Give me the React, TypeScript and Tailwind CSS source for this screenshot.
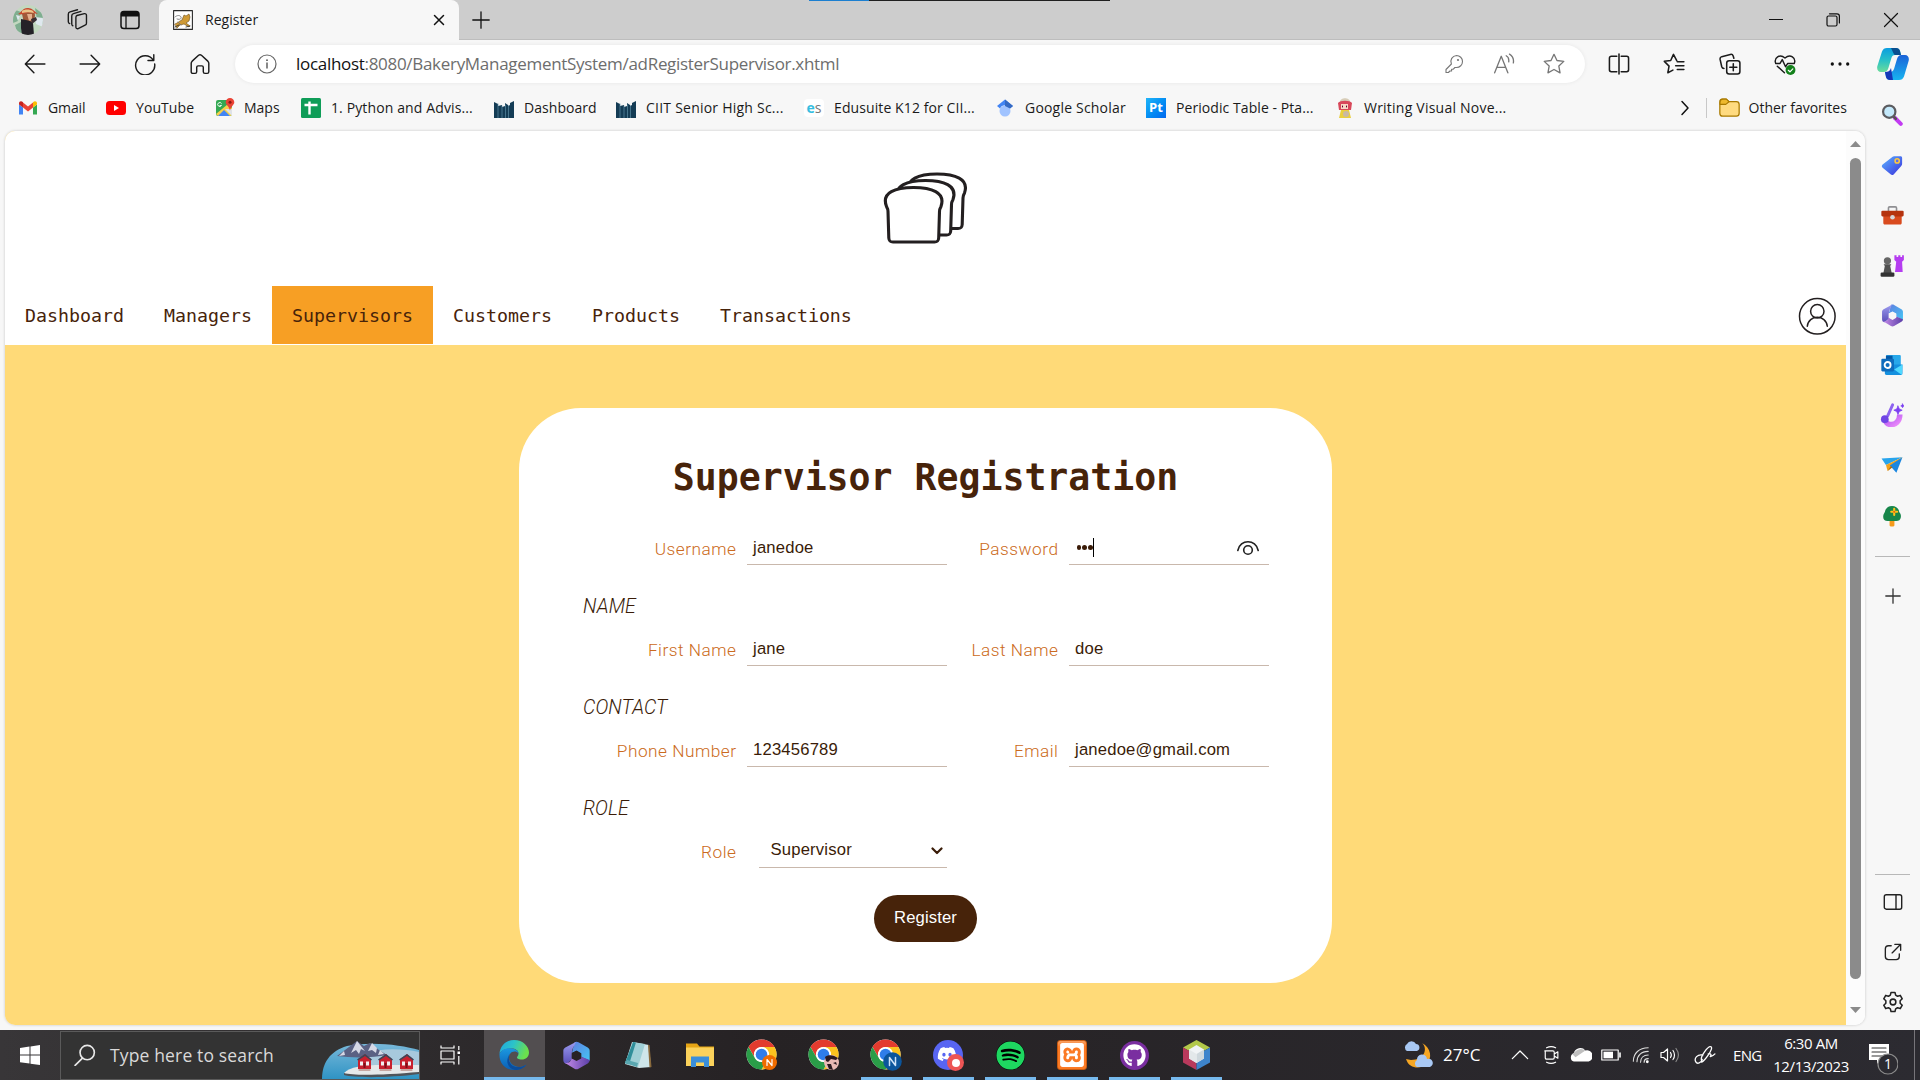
import React from "react";
import { FaDiscord, FaGithub, FaSpotify } from "react-icons/fa";
import { SiXampp } from "react-icons/si";

type IconProps = { w?: number; h?: number; box?: string; className?: string; children?: React.ReactNode };

function Icon({ w = 20, h, box = "0 0 20 20", className = "", children }: IconProps) {
  return (
    <svg
      width={w}
      height={h ?? w}
      viewBox={box}
      fill="none"
      stroke="none"
      strokeLinecap="round"
      strokeLinejoin="round"
      className={`shrink-0 ${className}`}
    >
      {children}
    </svg>
  );
}

/* ---------- title bar ---------- */

function Avatar() {
  return (
    <Icon w={30} h={30} box="0 0 30 30">
      <clipPath id="av"><circle cx="15" cy="15" r="15" /></clipPath>
      <g clipPath="url(#av)">
        <rect width="30" height="30" fill="#c3d8c0" />
        <path d="M0 4l8 3-3 9-5 2zM22 3l8 6v10l-6-4zM2 20l6-3 1 11-5-1z" fill="#7fae90" />
        <path d="M22 12l8 1v9l-7-3zM3 10l4 1-2 5z" fill="#dfe8ee" />
        <path d="M9 9c0-4 3-6 7-5 4 0 6 3 6 7l-2 7-4 2-5-2z" fill="#a05a3a" />
        <path d="M5 9c3-1 4-6 10-6 4 0 6 3 10 6-5-1-9-2-12-1-3 1-5 2-8 1z" fill="#c8472e" />
        <path d="M9 6c2-2 8-2 11 0l1 2c-4-1-8-1-12 0z" fill="#e9c58a" />
        <path d="M14 9l5 0v6l-3 1z" fill="#e3b08e" />
        <path d="M8 14l5 1 4 1 3 2 1 12H9l-1-7z" fill="#252228" />
        <path d="M18 14l5-2 1 3-5 4z" fill="#3a3034" />
      </g>
    </Icon>
  );
}

function TitleBar() {
  return (
    <div className="flex h-10 shrink-0 items-center border-b border-[#bdbdbd] bg-[#cdcdcd]">
      <div className="flex w-[159px] items-center">
        <div className="ml-[13px] w-[53px]"><Avatar /></div>
        <div className="w-[54px]">
          <Icon w={23}>
            <g stroke="#1b1b1b" strokeWidth="1.2">
              <path d="M9.500 6.500l6.500-1.600c1-.2 1.800.4 1.800 1.400v7c0 .8-.4 1.400-1.200 1.600l-6 3c-1 .4-2-.2-2-1.200V8.300c0-1 .2-1.600.9-1.800z" />
              <path d="M6 15.500c-.8-.3-1-.8-1-1.500V7c0-1.200.5-1.800 1.500-2.100L13 3" />
              <path d="M3.200 13.500c-.8-.3-1.200-.8-1.200-1.500V5.500c0-1.200.5-1.800 1.500-2.100L10 1.500" />
            </g>
          </Icon>
        </div>
        <Icon w={20}>
          <rect x="1" y="1.500" width="18" height="17" rx="2.800" stroke="#111" strokeWidth="1.500" />
          <path d="M1 3.500C1 2 2 1.500 3.500 1.500h13c1.500 0 2.500.8 2.500 2V6.500H1z" fill="#111" />
          <path d="M6 6v12" stroke="#111" strokeWidth="1.300" />
        </Icon>
      </div>
      <div className="flex h-10 w-[300px] items-center rounded-t-lg bg-[#f7f7f7] pl-[14px]">
        <Icon w={20}>
          <rect x=".6" y=".6" width="18.800" height="18.800" fill="#fff" stroke="#2a2a2a" strokeWidth="1.100" />
          <path d="M2 14c3-1 4-3 7-4l2-5 2 1 3-2 1 3-1 4-3 2 4 3-1 1-5-3-4 1-3 3z" fill="#cf9a35" stroke="#6b4d18" strokeWidth=".6" />
          <path d="M2 7c2-2 5-2 6 0s-2 3-4 2M5 12l3 3" stroke="#777" strokeWidth=".9" />
          <path d="M2 17l4-2M13 17l4-1" stroke="#333" strokeWidth=".9" />
        </Icon>
        <span className="ml-3 w-[225px] font-['Open_Sans'] text-[14px] tracking-[0.05px] text-[#1a1a1a]">Register</span>
        <Icon w={18} box="0 0 18 18"><path d="M4.500 4.500l9 9m0-9l-9 9" stroke="#111" strokeWidth="1.500" /></Icon>
      </div>
      <Icon w={18} className="ml-[13px]" box="0 0 18 18"><path d="M9 .8v16.400M.8 9h16.400" stroke="#111" strokeWidth="1.300" /></Icon>
      <div className="mb-[38px] ml-[319px] flex h-px w-[301px] shrink-0 bg-[#1f1f1f]">
        <div className="h-px w-[60px] bg-[#1c7fd0]" />
      </div>
      <div className="flex-1" />
      <div className="flex w-[173px] items-center">
        <div className="mr-[46px] ml-[22px] h-px w-[14px] bg-[#111]" />
        <Icon w={16} box="0 0 16 16" className="-ml-1 mr-[42px]">
          <rect x="2" y="4" width="10" height="10" rx="1.500" stroke="#111" strokeWidth="1.200" />
          <path d="M4.500 1.800h7.500c1.500 0 2.400.9 2.400 2.400V11" stroke="#111" strokeWidth="1.200" />
        </Icon>
        <Icon w={16} box="0 0 16 16"><path d="M1.500 1.500l13 13m0-13l-13 13" stroke="#111" strokeWidth="1.200" /></Icon>
      </div>
    </div>
  );
}

/* ---------- toolbar ---------- */

function Copilot() {
  return (
    <Icon w={32} box="0 0 32 32">
      <defs>
        <linearGradient id="cp1" x1="0" y1="0" x2="0" y2="1"><stop offset="0" stopColor="#0a9de0" /><stop offset=".5" stopColor="#27c0c8" /><stop offset="1" stopColor="#6bdc9a" /></linearGradient>
        <linearGradient id="cp2" x1="0" y1="0" x2="0" y2="1"><stop offset="0" stopColor="#1a62d8" /><stop offset="1" stopColor="#18b4f0" /></linearGradient>
      </defs>
      <path d="M5 3.500C6 1 7.500 0 10 0h9c2 0 3.500 1 4 3l1 4h-6c-2 0-3 1-3.600 3l-3 10c-.6 2-2 4-4.500 4H4c-3 0-4.500-3-3.600-6z" fill="url(#cp1)" />
      <path d="M14 0h5c2 0 3.500 1 4 3l1 4h-6c-1 0-2-3-4-7z" fill="#0a4f8f" />
      <path d="M27 28.500c-1 2.500-2.500 3.500-5 3.500h-9c-2 0-3.500-1-4-3l-1-5h5c2 0 3.200-1 4-3l3-10c.6-2 2-4 4.500-4H28c3 0 4.500 3 3.600 6z" fill="url(#cp2)" />
      <path d="M8 24c3 0 5-1 6-4l2 12h-3c-2 0-3.500-1-4-3z" fill="#1538b8" />
    </Icon>
  );
}

function Toolbar() {
  return (
    <div className="flex h-[47px] shrink-0 items-center">
      <div className="flex w-[235px] items-center gap-[33px] pl-6">
        <Icon w={22}><path d="M19 10H1.500M9 2L1.200 10 9 18" stroke="#1b1b1b" strokeWidth="1.300" /></Icon>
        <Icon w={22}><path d="M1 10h17.500M11 2l7.800 8L11 18" stroke="#1b1b1b" strokeWidth="1.300" /></Icon>
        <Icon w={22}><path d="M17.500 6.500A8.700 8.700 0 1 0 18.800 10M18 1.500v5.300h-5.300" stroke="#1b1b1b" strokeWidth="1.300" /></Icon>
        <Icon w={22}><path d="M2 9.300c0-.8.3-1.300.9-1.900l5.800-5.300c.8-.7 1.800-.7 2.600 0l5.800 5.300c.6.600.9 1.100.9 1.900V17c0 1-.6 1.500-1.500 1.500h-2c-1 0-1.500-.6-1.500-1.500v-4c0-.8-.5-1.300-1.300-1.300H8.300c-.8 0-1.300.5-1.300 1.300v4c0 1-.6 1.500-1.500 1.500h-2C2.600 18.500 2 18 2 17z" stroke="#1b1b1b" strokeWidth="1.300" /></Icon>
      </div>
      <div className="flex h-[38px] w-[1350px] items-center rounded-full bg-white pl-[22px] shadow-[0_0_4px_rgba(0,0,0,0.07)]">
        <Icon w={20}>
          <circle cx="10" cy="10" r="9" stroke="#666" strokeWidth="1.200" />
          <path d="M10 9v5" stroke="#555" strokeWidth="1.400" /><circle cx="10" cy="6.200" r=".9" fill="#555" />
        </Icon>
        <span className="ml-[19px] flex-1 whitespace-nowrap font-['Open_Sans'] text-[17px] tracking-[-0.3px] text-[#6d6d6d]">
          <span className="text-[#111]">localhost</span>:8080/BakeryManagementSystem/adRegisterSupervisor.xhtml
        </span>
        <div className="flex items-center gap-[29px] pr-[20px]">
          <Icon w={20}><path d="M12.500 1.500a6 6 0 0 1 0 12h-1.600l-1.600 1.700H7.600v1.800H5.900l-1.500 1.500H2v-3L7.400 10A6 6 0 0 1 12.500 1.500z" stroke="#767676" strokeWidth="1.100" /><circle cx="14" cy="6" r="1.100" fill="#767676" /></Icon>
          <Icon w={22}><path d="M1.500 18L7.500 3l6 15M3.600 13h7.800M12 2.500c2 1 2.600 3 2.300 5.500M15 1c3 1.800 4 5 3.500 8" stroke="#767676" strokeWidth="1.200" /></Icon>
          <Icon w={22} className="-ml-px"><path d="M10 1.200l2.700 5.600 6.200.8-4.500 4.300 1.100 6.100L10 15l-5.500 3 1.100-6.100L1.100 7.600l6.200-.8z" stroke="#767676" strokeWidth="1.200" /></Icon>
        </div>
      </div>
      <div className="flex flex-1 items-center gap-[33.300px] pl-[23px]">
        <Icon w={22}><path d="M10 1v18M8 3H3C2 3 1.300 3.700 1.300 4.700v10.600C1.300 16.300 2 17 3 17h5M12 3h5c1 0 1.700.7 1.700 1.700v10.600c0 1-.7 1.700-1.700 1.700h-5" stroke="#1b1b1b" strokeWidth="1.400" /></Icon>
        <Icon w={22}><path d="M12.500 7L9.500 1.200 7 6.800 1.200 7.600l4.300 4.300-1.100 6.100L9 15.600M13 8h6M11.500 11.500H19M13 15h6" stroke="#1b1b1b" strokeWidth="1.400" /></Icon>
        <Icon w={22}>
          <rect x="7" y="7" width="12" height="12" rx="2.200" stroke="#1b1b1b" strokeWidth="1.400" />
          <path d="M13 9.800v6.400M9.800 13h6.400M4.500 14c-1.200 0-1.700-.5-2-1.500L1 5.800C.8 4.500 1.200 3.700 2.500 3.300l7.800-2c1.200-.3 2.200.2 2.600 1.400l.6 2" stroke="#1b1b1b" strokeWidth="1.400" />
        </Icon>
        <Icon w={22}>
          <path d="M1.400 9C0 4.500 5 .500 10 4.500 15 .500 20 4.500 18.600 9M1.500 9.500h4l2-3.500 3 6.500 2-3h6M3 12l6.500 6" stroke="#1b1b1b" strokeWidth="1.300" />
          <circle cx="15" cy="15.500" r="4.500" fill="#12801a" /><path d="M13 15.700l1.500 1.400 2.600-2.700" stroke="#fff" strokeWidth="1.100" />
        </Icon>
        <Icon w={22}><g fill="#111"><circle cx="3" cy="10" r="1.500" /><circle cx="10" cy="10" r="1.500" /><circle cx="17" cy="10" r="1.500" /></g></Icon>
        <div className="-ml-[7px]"><Copilot /></div>
      </div>
    </div>
  );
}

/* ---------- bookmarks ---------- */

const Ciit = () => (
  <Icon w={20}>
    <path d="M0 4l4 2v14H0zM4 8l4-1v13H4zM8 9l3-1v12H8zM11 5l3 2v13h-3zM14 8l2-1v13h-2zM16 5l4-2v17h-4z" fill="#143c55" />
    <path d="M4 6v14M8 8v12M11.500 7v13M14.500 8v12" stroke="#5c8ea6" strokeWidth=".7" />
  </Icon>
);

const bookmarks: { label: string; cell: string; text: string; icon: React.ReactNode }[] = [
  {
    label: "Gmail", cell: "w-[88px]", text: "tracking-[-0.1px]",
    icon: <Icon w={20}><path d="M1 5v11.500h4V9.500L1 6.500z" fill="#4285f4" /><path d="M19 5v11.500h-4V9.500l4-3z" fill="#34a853" /><path d="M5 4.500l5 4 5-4v5l-5 4-5-4z" fill="#ea4335" /><path d="M1 5.500C1 3 3.500 2.800 5 4.200v5.300l-4-3z" fill="#c5221f" /><path d="M19 5.500c0-2.500-2.500-2.700-4-1.300v5.300l4-3z" fill="#fbbc04" /></Icon>,
  },
  {
    label: "YouTube", cell: "w-[109px]", text: "tracking-[0.08px]",
    icon: <Icon w={20}><rect y="3" width="20" height="14" rx="3.500" fill="#f00" /><path d="M8 7v6l5-3z" fill="#fff" /></Icon>,
  },
  {
    label: "Maps", cell: "w-[86px]", text: "tracking-[0px] -ml-px",
    icon: <Icon w={20}><rect x="1" y="2" width="16" height="16" rx="2" fill="#34a853" /><path d="M1 16L13 6l4 4v6c0 1-1 2-2 2H3z" fill="#f5d04b" /><path d="M3 18l6-6 6 6z" fill="#4285f4" /><path d="M10 11l7 7c0 0 0-7 0-7z" fill="#dfe3e8" /><path d="M15 0a4.300 4.300 0 0 1 4.300 4.300C19.300 7 16 8 15 12.500 14 8 10.700 7 10.700 4.300A4.300 4.300 0 0 1 15 0z" fill="#ea4335" /><circle cx="15" cy="4.300" r="1.500" fill="#8c1a12" /><path d="M6.500 5.500a2 2 0 1 0 0 2h-1.500" stroke="#fff" strokeWidth=".9" /></Icon>,
  },
  {
    label: "1. Python and Advis...", cell: "w-[193px]", text: "tracking-[0.12px]",
    icon: <Icon w={20}><rect width="20" height="20" rx="1.500" fill="#0f9d58" /><path d="M3.500 7h13M8.500 3.500v13" stroke="#fff" strokeWidth="2.400" strokeLinecap="butt" /></Icon>,
  },
  { label: "Dashboard", cell: "w-[122px]", text: "tracking-[0.05px]", icon: <Ciit /> },
  { label: "CIIT Senior High Sc...", cell: "w-[188px]", text: "tracking-[0.23px]", icon: <Ciit /> },
  {
    label: "Edusuite K12 for CII...", cell: "w-[191px]", text: "tracking-[0.1px]",
    icon: <span className="flex h-[18px] w-5 items-center justify-center rounded-sm bg-white font-['Open_Sans'] text-[14px] leading-none font-bold text-[#35bde0]">e<span className="font-normal text-[#777]">s</span></span>,
  },
  {
    label: "Google Scholar", cell: "w-[151px]", text: "tracking-[0.2px]",
    icon: <Icon w={20}><circle cx="10" cy="13" r="5.500" fill="#a0c3ff" /><path d="M10 1.500L2 8l3 2.500a5.500 5.500 0 0 1 10 0L18 8z" fill="#4285f4" /><path d="M10 1.500L18 8l-3 2.500L10 8z" fill="#356ac3" /></Icon>,
  },
  {
    label: "Periodic Table - Pta...", cell: "w-[189px]", text: "tracking-[0.07px]",
    icon: <span className="flex size-5 items-center justify-center bg-linear-to-br from-[#20b4f8] to-[#0767ee] font-['Open_Sans'] text-[13px] leading-none font-bold text-white">Pt</span>,
  },
  {
    label: "Writing Visual Nove...", cell: "w-[342px]", text: "tracking-[0.23px] -ml-px",
    icon: <Icon w={20}><path d="M5 4c0-5 10-5 10 0z" fill="#d8cdb8" /><path d="M3 5c2-3 12-3 14 0l-1 7H4z" fill="#d8485a" /><path d="M6 6h7v5H6z" fill="#f8d9c5" /><path d="M6 12l8 0 2 8H4z" fill="#e9cf3f" /><circle cx="11" cy="16" r="3" fill="#c9b9a4" /><path d="M7.500 8v1M11.500 8v1" stroke="#503" /></Icon>,
  },
];

function Bookmarks() {
  return (
    <div className="flex h-[41px] shrink-0 items-center pl-[18px] font-['Open_Sans'] text-[14px] text-[#1a1a1a]">
      {bookmarks.map((b) => (
        <div key={b.label} className={`flex shrink-0 items-center gap-[10px] ${b.cell}`}>
          {b.icon}
          <span className={`whitespace-nowrap ${b.text}`}>{b.label}</span>
        </div>
      ))}
      <Icon w={16} box="0 0 16 16"><path d="M5 1.500L11 8l-6 6.500" stroke="#111" strokeWidth="1.500" /></Icon>
      <div className="mr-3 ml-[12.500px] h-5 w-px bg-[#c8c8c8]" />
      <Icon w={21}>
        <path d="M.8 5C.8 2.500 1.500 2 3.500 2H7l2.500 2.500h7c1.800 0 2.700.8 2.700 2.700v8.300c0 2-.8 2.800-2.700 2.800h-13C1.600 18.300.8 17.500.8 15.500z" fill="#ffdb80" stroke="#a97a00" strokeWidth="1.200" />
        <path d="M1 7h5.500l3-2.500L7 2H3.500C1.500 2 1 3 1 5z" fill="#eeb92d" stroke="#a97a00" strokeWidth="1" />
      </Icon>
      <span className="ml-[9px] whitespace-nowrap tracking-[0px]">Other favorites</span>
    </div>
  );
}

/* ---------- web page ---------- */

const slice = "M9 69c-3.500 0-4-1.500-4.200-4L4 38.500c0-2-.4-3-1.500-5C-3 19 12 14.500 29.500 14.500S62 19 57 33.500c-1.100 2-1.500 3-1.500 5L54.700 65c-.2 2.500-.7 4-4.200 4z";

function Bread() {
  return (
    <svg width="86" height="74" viewBox="-2 -1 86 74" fill="#fff" stroke="#231f20" strokeWidth="3.100" strokeLinejoin="round">
      <path d={slice} transform="translate(23.500 -12.500)" />
      <path d={slice} transform="translate(12 -6)" />
      <path d={slice} transform="translate(0 1)" />
    </svg>
  );
}

const nav = ["Dashboard", "Managers", "Supervisors", "Customers", "Products", "Transactions"];

function PageHeader() {
  return (
    <header className="flex h-[214px] shrink-0 flex-col bg-white">
      <div className="flex h-[155px] justify-center pt-[40px] pr-px"><Bread /></div>
      <div className="flex h-[58px] items-center">
        {nav.map((n) => (
          <div
            key={n}
            className={`flex h-full items-center px-5 pt-px font-['DejaVu_Sans_Mono'] text-[18.27px] text-[#47230a] ${n === "Supervisors" ? "bg-[#f79f24]" : ""}`}
          >
            {n}
          </div>
        ))}
        <Icon w={38} box="0 0 38 38" className="mt-[2px] mr-[10px] ml-auto">
          <g stroke="#231f20" strokeWidth="1.500"><circle cx="19.300" cy="19.300" r="17.800" /><circle cx="19.300" cy="14.300" r="6.700" /><path d="M9.300 29.300c1-12 19-12 20 0" /></g>
        </Icon>
      </div>
    </header>
  );
}

function Label({ children, className = "" }: { children: React.ReactNode; className?: string }) {
  return (
    <label className={`shrink-0 pt-[10px] pr-[10.500px] text-right font-['Roboto'] text-[17.250px] font-light tracking-[0.5px] text-[#cb6a20] ${className}`}>{children}</label>
  );
}

function Field({ children, className = "w-[200px] pl-[6px]" }: { children: React.ReactNode; className?: string }) {
  return (
    <div className={`flex h-10 shrink-0 items-center border-b border-[#c9b8ac] font-['Liberation_Sans'] text-[16.67px] tracking-[0.18px] text-[#3a1c08] ${className}`}>
      <div className="flex h-full flex-1 items-center pt-[6px]">{children}</div>
    </div>
  );
}

function Section({ children }: { children: string }) {
  return <div className="h-[61px] pt-[30px] font-['Roboto'] text-[19.500px] leading-6 font-light tracking-[0.1px] text-[#3a1c08] italic">{children}</div>;
}

function Row({ children }: { children: React.ReactNode }) {
  return <div className="flex h-10 items-center">{children}</div>;
}

function RegistrationCard() {
  return (
    <main className="flex h-[575px] w-[813px] shrink-0 flex-col rounded-[62px] bg-white px-16">
      <h1 className="h-[117px] pt-[47px] text-center font-['DejaVu_Sans_Mono'] text-[36.5px] leading-[46px] font-bold whitespace-nowrap text-[#47230a]">
        Supervisor Registration
      </h1>
      <Row>
        <Label className="w-[164px]">Username</Label>
        <Field>janedoe</Field>
        <Label className="w-[122px]">Password</Label>
        <Field>
          <span className="flex items-center gap-[1.6px] pl-[1.500px]">
            <i className="size-[4.400px] rounded-full bg-[#3a1c08]" />
            <i className="size-[4.400px] rounded-full bg-[#3a1c08]" />
            <i className="size-[4.400px] rounded-full bg-[#3a1c08]" />
          </span>
          <span className="h-[19px] w-px bg-black" />
          <Icon w={24} h={16} box="0 0 24 16" className="mr-[9px] ml-auto">
            <path d="M1.800 10.500C4-1.200 20-1.200 22.200 10.500" stroke="#222" strokeWidth="1.600" /><circle cx="12" cy="10" r="4.300" stroke="#222" strokeWidth="1.600" />
          </Icon>
        </Field>
      </Row>
      <Section>NAME</Section>
      <Row>
        <Label className="w-[164px]">First Name</Label>
        <Field>jane</Field>
        <Label className="w-[122px]">Last Name</Label>
        <Field>doe</Field>
      </Row>
      <Section>CONTACT</Section>
      <Row>
        <Label className="w-[164px]">Phone Number</Label>
        <Field>123456789</Field>
        <Label className="w-[122px]">Email</Label>
        <Field>janedoe@gmail.com</Field>
      </Row>
      <Section>ROLE</Section>
      <Row>
        <Label className="w-[164px]">Role</Label>
        <Field className="ml-3 w-[188px] pl-[11.500px]">
          <span className="-mt-[3px]">Supervisor</span>
          <Icon w={12} h={8} box="0 0 12 8" className="mr-[4px] ml-auto"><path d="M1.500 1.500L6 6l4.500-4.500" stroke="#3a1c08" strokeWidth="2.200" /></Icon>
        </Field>
      </Row>
      <button className="mt-[27px] h-[47px] w-[103px] self-center rounded-full bg-[#47230a] pb-[2px] font-['Liberation_Sans'] text-[16.67px] tracking-[0.1px] text-white">
        Register
      </button>
    </main>
  );
}

function Viewport() {
  return (
    <div className="ml-[5px] flex h-[894px] w-[1860px] shrink-0 overflow-hidden rounded-[10px] bg-white shadow-[0_0_3px_rgba(0,0,0,0.2)]">
      <div className="flex w-[1841px] flex-col bg-[#ffda78]">
        <PageHeader />
        <div className="flex justify-center pt-[63px]"><RegistrationCard /></div>
      </div>
      <div className="flex w-[19px] flex-col items-center bg-[#fcfcfc] pt-[10px]">
        <Icon w={11} h={6} box="0 0 11 6"><path d="M0 6L5.500 0 11 6z" fill="#8b8b8b" /></Icon>
        <div className="mt-[11px] h-[821px] w-[11px] rounded-full bg-[#8b8b8b]" />
        <Icon w={11} h={6} box="0 0 11 6" className="mt-[28px]"><path d="M0 0l5.500 6L11 0z" fill="#8b8b8b" /></Icon>
      </div>
    </div>
  );
}

/* ---------- Edge sidebar ---------- */

function HexLogo({ w, h, hole }: { w: number; h: number; hole: string }) {
  return (
    <Icon w={w} h={h} box="0 0 22 22">
      <defs>
        <linearGradient id="hx1" x1="0" y1="0" x2="1" y2="1"><stop offset="0" stopColor="#5f7fe0" /><stop offset="1" stopColor="#44c5f5" /></linearGradient>
        <linearGradient id="hx2" x1="0" y1="0" x2="0" y2="1"><stop offset="0" stopColor="#9c9cf0" /><stop offset="1" stopColor="#5a4fb8" /></linearGradient>
        <linearGradient id="hx3" x1="0" y1="0" x2="1" y2="0"><stop offset="0" stopColor="#c58be8" /><stop offset="1" stopColor="#5b3fa8" /></linearGradient>
      </defs>
      <path d="M9.500 1c1-.6 2-.6 3 0l7 4c1 .6 1.500 1.500 1.500 2.500V15l-6.500-3V9.500L11 7.500 7.500 9z" fill="url(#hx1)" />
      <path d="M10.500 .7L2.500 5C1.500 5.600 1 6.500 1 7.500v7c0 1.500 1 3 2.500 3L7.500 14V9c0-3 1.500-4.500 3-8.300z" fill="url(#hx2)" />
      <path d="M2 16.500l7.500 4.500c1 .6 2 .6 3 0l7-4c1-.6 1.500-1.500 1.500-2.500l-6.500-2.500-3.500 2.500-3.500-1.500c-1 3-3 4-5.500 3.500z" fill="url(#hx3)" />
      <path d="M11 7.200l3.600 2v4L11 15.200l-3.600-2v-4z" fill={hole} />
    </Icon>
  );
}

function Sidebar() {
  return (
    <aside className="flex w-[55px] shrink-0 flex-col items-center">
      <div className="flex flex-col items-center pt-[3px] pr-px [&>div]:flex [&>div]:h-[50px] [&>div]:items-center">
        <div>
          <Icon w={22}><path d="M12.500 12.500l5.500 5.500" stroke="#c23bf2" strokeWidth="3.600" /><path d="M11.500 11.500l2 2" stroke="#555" strokeWidth="2.200" /><circle cx="7.500" cy="7" r="5.600" fill="#c4e9fb" stroke="#5c5c60" strokeWidth="2" /></Icon>
        </div>
        <div>
          <Icon w={22}>
            <linearGradient id="tg" x1="0" y1="0" x2="1" y2="1"><stop offset="0" stopColor="#5ab5ff" /><stop offset="1" stopColor="#3b2fdc" /></linearGradient>
            <path d="M10 3c.8-.8 1.500-1 2.500-1l5 0c1.200 0 1.700.6 1.700 1.700v5c0 1-.2 1.600-1 2.400l-6.500 7.200c-1 1-2 1-3 .2L1.500 12.500c-1-1-1-2 0-3z" fill="url(#tg)" /><circle cx="14.700" cy="6.300" r="1.900" fill="#5b6cf0" stroke="#ffc83d" strokeWidth="1.400" />
          </Icon>
        </div>
        <div>
          <Icon w={23} className="mt-px"><path d="M6.500 6V3.500c0-.6.4-1 1-1h5c.6 0 1 .4 1 1V6" stroke="#8f8f93" strokeWidth="1.400" /><path d="M2 9h16v7.500c0 .8-.5 1.300-1.300 1.300H3.300c-.8 0-1.300-.5-1.300-1.300z" fill="#d94b1e" /><rect x=".3" y="5.800" width="19.400" height="5" rx="1" fill="#b5330e" /><circle cx="10" cy="11.500" r="2" fill="#d6d6da" /></Icon>
        </div>
        <div>
          <Icon w={24} className="mt-px"><path d="M12 1h1.800v1.500h1.400V1h1.800v1.500h1.400V1h1.500v4l-1.500 1.500.5 8.500H12.500l1-8.500L12 5z" fill="#b53df0" /><circle cx="6.200" cy="5.700" r="3" fill="#666" /><path d="M3 8.500h6.500L8.500 10l1.300 6H2.800L4 10z" fill="#505050" /><rect x=".5" y="15.500" width="11.500" height="3.500" rx="1" fill="#333" /></Icon>
        </div>
        <div><HexLogo w={23} h={23} hole="#f7f7f7" /></div>
        <div>
          <Icon w={22}><rect x="4.500" y=".8" width="13.500" height="10" rx="1" fill="#28a8ea" /><path d="M4.500 1.500h6v5h-6z" fill="#0358a7" /><path d="M3.500 9.500h16v8c0 .8-.5 1.500-1.300 1.500H5c-1 0-1.500-.6-1.500-1.500z" fill="#1490df" /><path d="M19.500 9.500L12 14l7 5z" fill="#50d9ff" /><rect x=".3" y="4.300" width="11.500" height="11.500" rx="1" fill="#0f6cbd" /><circle cx="6" cy="10" r="2.700" stroke="#fff" strokeWidth="1.700" /></Icon>
        </div>
        <div>
          <Icon w={24}>
            <linearGradient id="ds" x1="0" y1="0" x2="1" y2="1"><stop offset="0" stopColor="#a24bf0" /><stop offset="1" stopColor="#ee8cfa" /></linearGradient>
            <path d="M4 12c0 4 2.500 6 5.500 6s7-2.500 7-8.500" stroke="url(#ds)" strokeWidth="4.600" strokeLinecap="butt" /><path d="M10.500 1.500l-4 9" stroke="#8d63f0" strokeWidth="2.400" /><circle cx="4" cy="13.500" r="3.200" fill="#6f45e4" /><path d="M15 2.500l1.100 2.400 2.400 1.100-2.400 1.100L15 9.500l-1.100-2.400L11.500 6l2.400-1.100zM18.800.8l.5 1.100 1 .5-1 .5-.5 1-.5-1-1-.5 1-.5z" fill="#7b3ff2" stroke="#7b3ff2" strokeWidth=".6" />
          </Icon>
        </div>
        <div>
          <Icon w={22}><path d="M.5 4L19.500 3 4.500 10z" fill="#27a4ec" /><path d="M4.500 10L19.500 3 6 15.500z" fill="#f2a21b" /><path d="M8 10.500L19.500 3 14 17z" fill="#1a86e0" /><path d="M6 15.500l3-4.500 1.500 1z" fill="#b06a08" /></Icon>
        </div>
        <div>
          <Icon w={22} className="mt-px"><rect x="7.800" y="12" width="4.400" height="7.500" rx="1" fill="#f59b1c" /><path d="M10 .8c4 0 6.500 3 6.500 5.500 1.500 1.500 1.800 3 1.500 5-.3 2.200-2 3.200-4 3.200H6c-2.500 0-4-1.300-4-3.700 0-1.800.6-3 1.500-4.500C4 3 6.500.8 10 .8z" fill="#17864a" /><path d="M12 3.500v5.500M9.300 6.200h5.400" stroke="#ffc21a" strokeWidth="1.900" /><circle cx="12" cy="6.200" r="1" fill="#e56b12" /></Icon>
        </div>
      </div>
      <div className="mt-4 h-px w-[35px] bg-[#b8b8b8]" />
      <Icon w={16} box="0 0 16 16" className="mt-[31px]"><path d="M8 .8v14.400M.8 8h14.400" stroke="#333" strokeWidth="1.300" /></Icon>
      <div className="mt-auto h-px w-[35px] bg-[#b8b8b8]" />
      <div className="mb-[3px] flex flex-col items-center pt-[2px] [&>div]:flex [&>div]:h-[50px] [&>div]:items-center">
        <div><Icon w={20}><rect x="1.300" y="2.800" width="17.400" height="14.400" rx="2" stroke="#222" strokeWidth="1.400" /><path d="M13 3v14" stroke="#222" strokeWidth="1.400" /></Icon></div>
        <div><Icon w={18}><path d="M8 3H5C3 3 1.500 4.200 1.500 6.500v8.500c0 2 1.300 3.500 3.500 3.500h8.500c2 0 3.500-1.300 3.500-3.500V12M12 1.500h6.500V8M18 2L9 11" stroke="#222" strokeWidth="1.500" /></Icon></div>
        <div><Icon w={22}><path d="M8.200 1.300h3.600l.6 2.500 1.700 1 2.500-.8 1.800 3.100-1.900 1.800v2.200l1.900 1.800-1.800 3.100-2.500-.8-1.700 1-.6 2.500H8.200l-.6-2.500-1.700-1-2.500.8-1.800-3.100 1.900-1.800V8.900L1.600 7.100 3.400 4l2.500.8 1.700-1z" stroke="#222" strokeWidth="1.400" /><circle cx="10" cy="10" r="2.600" stroke="#222" strokeWidth="1.400" /></Icon></div>
      </div>
    </aside>
  );
}

/* ---------- taskbar ---------- */

function Chrome({ children }: { children?: React.ReactNode }) {
  return (
    <Icon w={32} box="0 0 32 32">
      <circle cx="15.500" cy="15.500" r="15" fill="#fff" />
      <path d="M2.500 8A15 15 0 0 1 28.500 8H15.500a7.500 7.500 0 0 0-6.500 11.250z" fill="#e33b2e" />
      <path d="M28.500 8A15 15 0 0 1 15.500 30.500L22 19.250A7.500 7.500 0 0 0 15.500 8z" fill="#fcc31e" />
      <path d="M15.500 30.500A15 15 0 0 1 2.500 8L9 19.250a7.500 7.500 0 0 0 13 0z" fill="#2a9d48" />
      <circle cx="15.500" cy="15.500" r="7.300" fill="#fff" /><circle cx="15.500" cy="15.500" r="5.800" fill="#2f7de9" />
      {children}
    </Icon>
  );
}

function EdgeLogo() {
  return (
    <Icon w={30} box="0 0 30 30">
      <defs>
        <linearGradient id="eg1" x1="0" y1="0" x2="1" y2=".3"><stop offset="0" stopColor="#1fa5e0" /><stop offset=".5" stopColor="#2cc3c8" /><stop offset="1" stopColor="#6be04d" /></linearGradient>
        <linearGradient id="eg2" x1="0" y1="0" x2="0" y2="1"><stop offset="0" stopColor="#1b98e0" /><stop offset="1" stopColor="#0b5fb5" /></linearGradient>
      </defs>
      <path d="M.5 14C1 5.500 7.500 0 15 0c9 0 15 6.500 15 12.500 0 4.500-3.500 7-7 7-4 0-5-1.200-5-2.300 0-.8 1.500-1.200 1.500-3.700 0-3-3-5-7-5C6 8.500 2 10.500.5 14z" fill="url(#eg1)" />
      <path d="M.5 14C2 10.500 6 8 11 8.300c5 .2 8.500 2.700 8.500 5.200-1-1.500-2.500-2-4-2-3.500 0-5.500 3-5.500 6 0 6 5.500 9.500 10.500 9.500 3 0 5-1 7-2.500C25 28 20 30 15 30 6 30 0 23 .5 14z" fill="url(#eg2)" />
      <path d="M11 13.500C8 18 10.500 28 20 27c3 0 5.500-1.200 7.500-2.600-2.500 3.600-7 5.600-11.500 5.600C10 29 5 22 11 13.500z" fill="#0c4d9c" />
    </Icon>
  );
}

const apps: { id: string; icon: React.ReactNode; line?: string; cell?: string }[] = [
  { id: "edge", icon: <EdgeLogo />, line: "w-[61px]", cell: "bg-[#524e50]" },
  { id: "m365", icon: <HexLogo w={29} h={29} hole="#282325" /> },
  { id: "notepad", icon: <Icon w={30} box="0 0 30 30"><path d="M9 2l17 3 2 22-12 1-14-4z" fill="#cfe6ea" /><path d="M10 2l12 2-7 23-13-4z" fill="#9fd0d6" /><path d="M10 2l3 .5-7 22-4-1.500z" fill="#2f8f9a" /><path d="M4 20l11 3-1 4-12-4z" fill="#5aa7b0" /><path d="M25 5l1.500 0 2 22-2 .5z" fill="#8a6a3c" /></Icon> },
  { id: "files", icon: <Icon w={28} h={30} box="0 0 28 30"><path d="M0 3.500h11l2.500 3H28V25H0z" fill="#e6a515" /><path d="M0 7.500h28V26H0z" fill="#fbd25b" /><path d="M5 16.500h18V27h-5v-4.500h-8V27H5z" fill="#3b8fd9" /></Icon> },
  { id: "chrome1", icon: <Chrome><circle cx="23.500" cy="23.500" r="7.500" fill="#ef6c00" /><path d="M21 26.500v-6l5 6v-6" stroke="#fff" strokeWidth="1.200" /></Chrome> },
  { id: "chrome2", icon: <Chrome><circle cx="23.500" cy="23.500" r="7.500" fill="#e9b9b4" /><path d="M17 18c3-3 9-2 13 1l-2 2-5-1-3 3-2-1zM19 25l4 0 2 6-4-1zM25 24l3-1 1 3z" fill="#2a1a20" /></Chrome> },
  { id: "chrome3", icon: <Chrome><circle cx="22.500" cy="22.500" r="9.300" fill="#0b559c" /><path d="M19.500 26.500v-8l6 8v-8" stroke="#cfe4fa" strokeWidth="1.500" /></Chrome>, line: "w-[51px]" },
  {
    id: "discord", line: "w-[51px]",
    icon: (
      <span className="relative flex size-[30px] items-center justify-center rounded-full bg-[#5865f2]">
        <FaDiscord size={20} color="#fff" className="-mt-0.5 -ml-0.5" />
        <span className="absolute -right-px -bottom-px flex size-[17px] items-center justify-center rounded-full bg-[#ed5555]"><i className="size-[8px] rounded-full bg-white" /></span>
      </span>
    ),
  },
  { id: "spotify", icon: <span className="rounded-full bg-black"><FaSpotify size={29} color="#1ed760" /></span>, line: "w-[51px]" },
  { id: "xampp", icon: <span className="flex size-[30px] items-center justify-center rounded-[3px] border border-[#c85a10] bg-linear-to-b from-[#f9a060] via-[#fb7a24] via-20% to-[#fb7a24]"><SiXampp size={24} color="#fff" /></span>, line: "w-[51px]" },
  { id: "github", icon: <span className="flex size-[29px] items-center justify-center rounded-full bg-[#7a2ea0]"><FaGithub size={23} color="#fff" /></span>, line: "w-[51px]" },
  { id: "netbeans", icon: <Icon w={27} h={30} box="0 0 27 30"><path d="M13.500 0L27 7.500 13.500 15 0 7.500z" fill="#b3c94a" /><path d="M0 7.500L13.500 15v15L0 22.500z" fill="#b8395c" /><path d="M27 7.500L13.500 15v15L27 22.500z" fill="#3d84cc" /><path d="M13.500 5L21 9.500v9L13.500 23 6 18.500v-9z" fill="#f1f4f6" /><path d="M13.500 14L21 9.500v9L13.500 23z" fill="#cfd8dd" /><path d="M13.500 14v9L6 18.500v-9z" fill="#e3e8ea" /></Icon>, line: "w-[51px]" },
];

function SearchArt() {
  return (
    <Icon w={97} h={48} box="0 0 97 48">
      <linearGradient id="lake" x1="0" y1="0" x2="0" y2="1"><stop offset="0" stopColor="#78b9da" /><stop offset="1" stopColor="#2f93c4" /></linearGradient>
      <path d="M0 48C0 32 8 20 25 15 50 10 80 14 97 19v29z" fill="url(#lake)" />
      <path d="M40 24c20-8 40-6 57-3v16H42z" fill="#a7c9dd" />
      <path d="M15 25l12-9 8-6 7 5 6-3 9 7 8 5c-14 3-35 3-50 1z" fill="#5a6183" />
      <path d="M35 10l-6 12 5-3 3 4 2-5 4 2zM50 12l-4 8 4-1 4 3 1-5zM22 20l-5 5 6-1zM58 19l-2 5 6-1z" fill="#d6d9e6" />
      <path d="M22 42c5-6 20-8 38-8h37v8L60 44H24z" fill="#e6e8ea" /><path d="M22 42c10 3 40 2 75-1v2c-30 4-65 4-75 1z" fill="#50545a" />
      {[36, 57, 78].map((x) => (
        <g key={x} transform={`translate(${x} 23)`}>
          <path d="M0 5l7-5 6 5v10H0z" fill="#c8202e" /><path d="M-1 5.500L7 0l7 5.500-1 1L7 2 0 6.500z" fill="#3a4758" /><path d="M2 7.500h3v4H2zM8 7.500h3v4H8z" fill="#f1eef0" /><path d="M5.500 9v5h2V9z" fill="#7b1018" /><path d="M1 16h11" stroke="#a5675c" strokeWidth="1" />
        </g>
      ))}
    </Icon>
  );
}

function Taskbar() {
  return (
    <footer className="flex h-[50px] shrink-0 items-center bg-linear-to-r from-[#383638] via-[#262224] via-40% to-[#2c2b31] font-['Open_Sans'] text-white">
      <div className="flex w-[60px] justify-center">
        <Icon w={20}><path d="M0 3l9.500-1.400v8H0zM10.500 1.400L20 0v9.600h-9.500zM0 10.500h9.500v8.100L0 17.200zM10.500 10.500H20V20l-9.500-1.300z" fill="#fff" /></Icon>
      </div>
      <div className="flex h-[49px] w-[360px] items-center overflow-hidden border border-[#5a5a5a] bg-[#333]">
        <Icon w={22} className="ml-[13px]"><path d="M7.500 13L1 19.500" stroke="#e8e8e8" strokeWidth="1.500" /><circle cx="12" cy="7.800" r="6.500" stroke="#e8e8e8" strokeWidth="1.500" /></Icon>
        <span className="ml-[14px] w-[213px] whitespace-nowrap text-[17.500px] tracking-[0.15px] text-[#d9d9d9]">Type here to search</span>
        <SearchArt />
      </div>
      <div className="flex w-[63px] justify-center pr-[4px]">
        <Icon w={20}><path d="M1 .5v2.500h13V.5M1 19.500V17h13v2.500M1 6h13v8H1zM18.800 1v4M18.800 11v8.500" stroke="#fff" strokeWidth="1.200" strokeLinecap="butt" /><path d="M17.500 6.500h2.500v2.500h-2.500z" fill="#fff" /></Icon>
      </div>
      {apps.map((a) => (
        <div key={a.id} className={`mx-[0.5px] flex h-[50px] w-[61px] shrink-0 flex-col items-center ${a.cell ?? ""}`}>
          <div className="flex h-[47px] items-center justify-center pt-[3px]">{a.icon}</div>
          {a.line ? <div className={`h-[3px] bg-[#76b9ed] ${a.line}`} /> : null}
        </div>
      ))}
      <div className="ml-auto flex h-full w-[517px] shrink-0 items-center">
        <Icon w={30} box="0 0 30 30">
          <path d="M19 3c6 5 3 17-11 17l-5-1c3 10 14 10 20 6C30 18 28 8 19 3z" fill="#f5a623" />
          <path d="M4 11a4 4 0 0 1 0-7 5 5 0 0 1 9 0 3.600 3.600 0 0 1 1 7z" fill="#a8c8f4" /><path d="M14 27a4 4 0 0 1 0-7 5 5 0 0 1 10-1 4 4 0 0 1 3 8z" fill="#a8c8f4" />
        </Icon>
        <span className="ml-[10px] w-[79px] shrink-0 text-[17px] tracking-[0px]">27°C</span>
        <div className="flex w-[200px] shrink-0 items-center">
          <Icon w={18} className="-ml-[11px] mr-[14px]"><path d="M1.500 14l8.500-8.500 8.500 8.500" stroke="#fff" strokeWidth="1.400" /></Icon>
          <Icon w={18} className="mr-[9px]"><path d="M2 5.500h9c1 0 1.500.5 1.500 1.500v6c0 1-.5 1.500-1.500 1.500H4c-1 0-1.500-.5-1.500-1.500V6M12.500 9l4-2.500v7l-4-2.500M4 2c3-1.500 7-1.500 10 0M4 18c3 1.500 7 1.500 10 0" stroke="#fff" strokeWidth="1.300" /></Icon>
          <Icon w={22} className="mr-[9px]"><path d="M3.500 16a4 4 0 0 1 0-7.600A6 6 0 0 1 14 6a5 5 0 0 1 3 10z" fill="#fff" /><path d="M6 6a6 6 0 0 1 8 0l-9 6-3-3z" fill="#bfbfbf" /></Icon>
          <Icon w={20} className="mr-[11px]"><rect x=".8" y="5" width="16.400" height="10" stroke="#fff" strokeWidth="1.200" /><rect x="2.500" y="6.700" width="9.500" height="6.600" fill="#fff" /><path d="M19 8v4" stroke="#fff" strokeWidth="1.600" /></Icon>
          <Icon w={18} className="mr-[10px]"><path d="M1.500 17C1.500 8 8 2 18 2M5.500 17.500C5.500 11 10 6 18 6M9.500 18C9.500 13.500 12.500 10 18 10" stroke="#ddd" strokeWidth="1.200" /><path d="M13.500 18c0-2.500 1.700-4 4.500-4" stroke="#ddd" strokeWidth="1.400" /><circle cx="17" cy="17.500" r="1.600" fill="#fff" /></Icon>
          <Icon w={20} className="mr-[14px]"><path d="M1 7.500h2.500L7.500 4v12l-4-3.500H1z" stroke="#fff" strokeWidth="1.200" /><path d="M10.500 7.500c1 1.500 1 3.500 0 5M13 5.500c2 2.500 2 6.500 0 9" stroke="#fff" strokeWidth="1.200" /><path d="M16 3.500c3 4 3 9 0 13" stroke="#888" strokeWidth="1.200" /></Icon>
          <Icon w={22}><path d="M7 15C5 12 13 1 15.500 2.500 18 4 10 15 7 16.500zM8 10c-5-1-8 3-6.500 6s5 1 6-2M13 9c2-1 3 1 2 2s2 0 4-2" stroke="#fff" strokeWidth="1.200" /></Icon>
        </div>
        <span className="ml-[11px] w-[31px] shrink-0 text-[15px] tracking-[-0.7px]">ENG</span>
        <div className="flex w-[94px] shrink-0 flex-col items-center text-[15px] leading-[23px] tracking-[-0.4px]">
          <span>6:30 AM</span>
          <span>12/13/2023</span>
        </div>
        <Icon w={32} h={38} box="0 0 32 38" className="mt-[9px] ml-[8px]">
          <path d="M3 3h20v16h-9l-3 4v-4H3z" fill="#fff" /><path d="M6 7h14M6 11h14M6 15h10" stroke="#333" strokeWidth="1.100" />
          <circle cx="22" cy="23" r="10" fill="#2c2b31" stroke="#8b8b8b" strokeWidth="1.200" />
          <text x="22" y="28" textAnchor="middle" fontSize="14" fill="#fff" fontFamily="Open Sans">1</text>
        </Icon>
        <div className="mr-[5px] ml-auto h-full w-px bg-[#77757a]" />
      </div>
    </footer>
  );
}

export default function App() {
  return (
    <div className="flex h-[1080px] w-[1920px] flex-col overflow-hidden bg-[#f7f7f7]">
      <TitleBar />
      <Toolbar />
      <div className="flex h-[943px] shrink-0">
        <div className="flex w-[1865px] flex-col">
          <Bookmarks />
          <div className="mt-[3px] flex"><Viewport /></div>
        </div>
        <Sidebar />
      </div>
      <Taskbar />
    </div>
  );
}
